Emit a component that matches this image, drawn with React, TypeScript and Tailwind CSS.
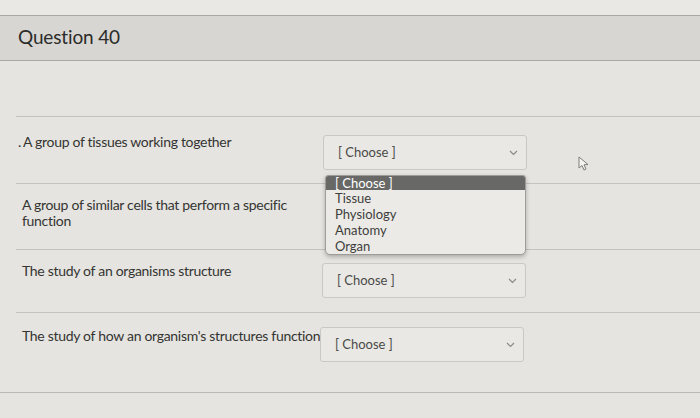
import React from 'react';

const font = { fontFamily: 'Lato, "Open Sans", sans-serif' };

const Chevron = () => (
  <svg width="9" height="6" viewBox="0 0 9 6" className="text-[#8a8986]">
    <path d="M1 1 L4.5 4.5 L8 1" fill="none" stroke="currentColor" strokeWidth="1.2" />
  </svg>
);

const Select: React.FC<{ className?: string }> = ({ className = '' }) => (
  <div
    className={`shrink-0 h-[35px] w-[204px] flex items-center justify-between pl-[14px] pr-[8px] border border-[#c9c8c4] rounded-[3px] bg-[#e9e8e4] text-[13px] text-[#4a4a48] ${className}`}
  >
    <span>[ Choose ]</span>
    <Chevron />
  </div>
);

const Row: React.FC<{ h: string; children: React.ReactNode }> = ({ h, children }) => (
  <div className={`${h} flex items-start`}>{children}</div>
);

const options = ['Tissue', 'Physiology', 'Anatomy', 'Organ'];

export default function App() {
  return (
    <div className="w-[700px] h-[418px] overflow-hidden bg-[#e5e4e0] text-[#343432] relative" style={font}>
      <div className="h-[16px] bg-[#e9e8e4] border-b border-[#a9a8a4]" />
      <div className="h-[45px] bg-[#d7d6d2] border-b border-[#a9a8a4] flex items-center pl-[18px] pb-[2px]">
        <h1 className="text-[19px] text-[#2b2b2a] tracking-[-0.15px]">Question 40</h1>
      </div>
      <div className="h-[55px]" />
      <div className="ml-[16px] border-t border-[#c4c3bf]" />

      {/* row 1 */}
      <Row h="h-[66px]">
        <p className="shrink-0 mt-[15px] pl-[18px] w-[323px] text-[14px] leading-[20px] tracking-[-0.3px]">
          <span className="mr-[2px]">.</span>A group of tissues working together
        </p>
        <Select className="mt-[18px]" />
      </Row>
      <div className="ml-[16px] border-t border-[#c4c3bf]" />

      {/* row 2 */}
      <Row h="h-[65px]">
        <p className="shrink-0 mt-[13px] pl-[22px] w-[323px] text-[14px] leading-[16px] tracking-[-0.3px]">
          A group of similar cells that perform a specific
          <br />
          function
        </p>
      </Row>
      <div className="ml-[16px] border-t border-[#c4c3bf]" />

      {/* row 3 */}
      <Row h="h-[62px]">
        <p className="shrink-0 mt-[11px] pl-[22px] w-[322px] text-[14px] leading-[20px] tracking-[-0.3px]">
          The study of an organisms structure
        </p>
        <Select className="mt-[13px]" />
      </Row>
      <div className="ml-[16px] border-t border-[#c4c3bf]" />

      {/* row 4 */}
      <Row h="h-[79px]">
        <p className="shrink-0 mt-[13px] pl-[22px] w-[320px] text-[14px] leading-[20px] tracking-[-0.3px] whitespace-nowrap">
          The study of how an organism's structures function
        </p>
        <Select className="mt-[14px]" />
      </Row>
      <div className="border-t border-[#b9b8b4]" />

      {/* open dropdown list */}
      <div className="absolute left-[325px] top-[175px] w-[201px] bg-[#ebeae6] border border-[#9d9c98] rounded-b-[5px] rounded-t-[3px] shadow-[0_2px_4px_rgba(0,0,0,0.25)] text-[13px] leading-[16px] text-[#3e3e3c] overflow-hidden">
        <div className="bg-[#686866] text-white pl-[9px] h-[14px] leading-[14px]">[ Choose ]</div>
        {options.map(o => (
          <div key={o} className="pl-[9px]">{o}</div>
        ))}
      </div>

      {/* mouse pointer */}
      <svg className="absolute left-[578px] top-[156px]" width="12" height="16" viewBox="0 0 12 16">
        <path d="M1 1 L1 12 L4 9.5 L6 14 L8 13 L6 8.8 L10 8.5 Z" fill="#f4f4f2" stroke="#7d7c79" strokeWidth="1" />
      </svg>
    </div>
  );
}
